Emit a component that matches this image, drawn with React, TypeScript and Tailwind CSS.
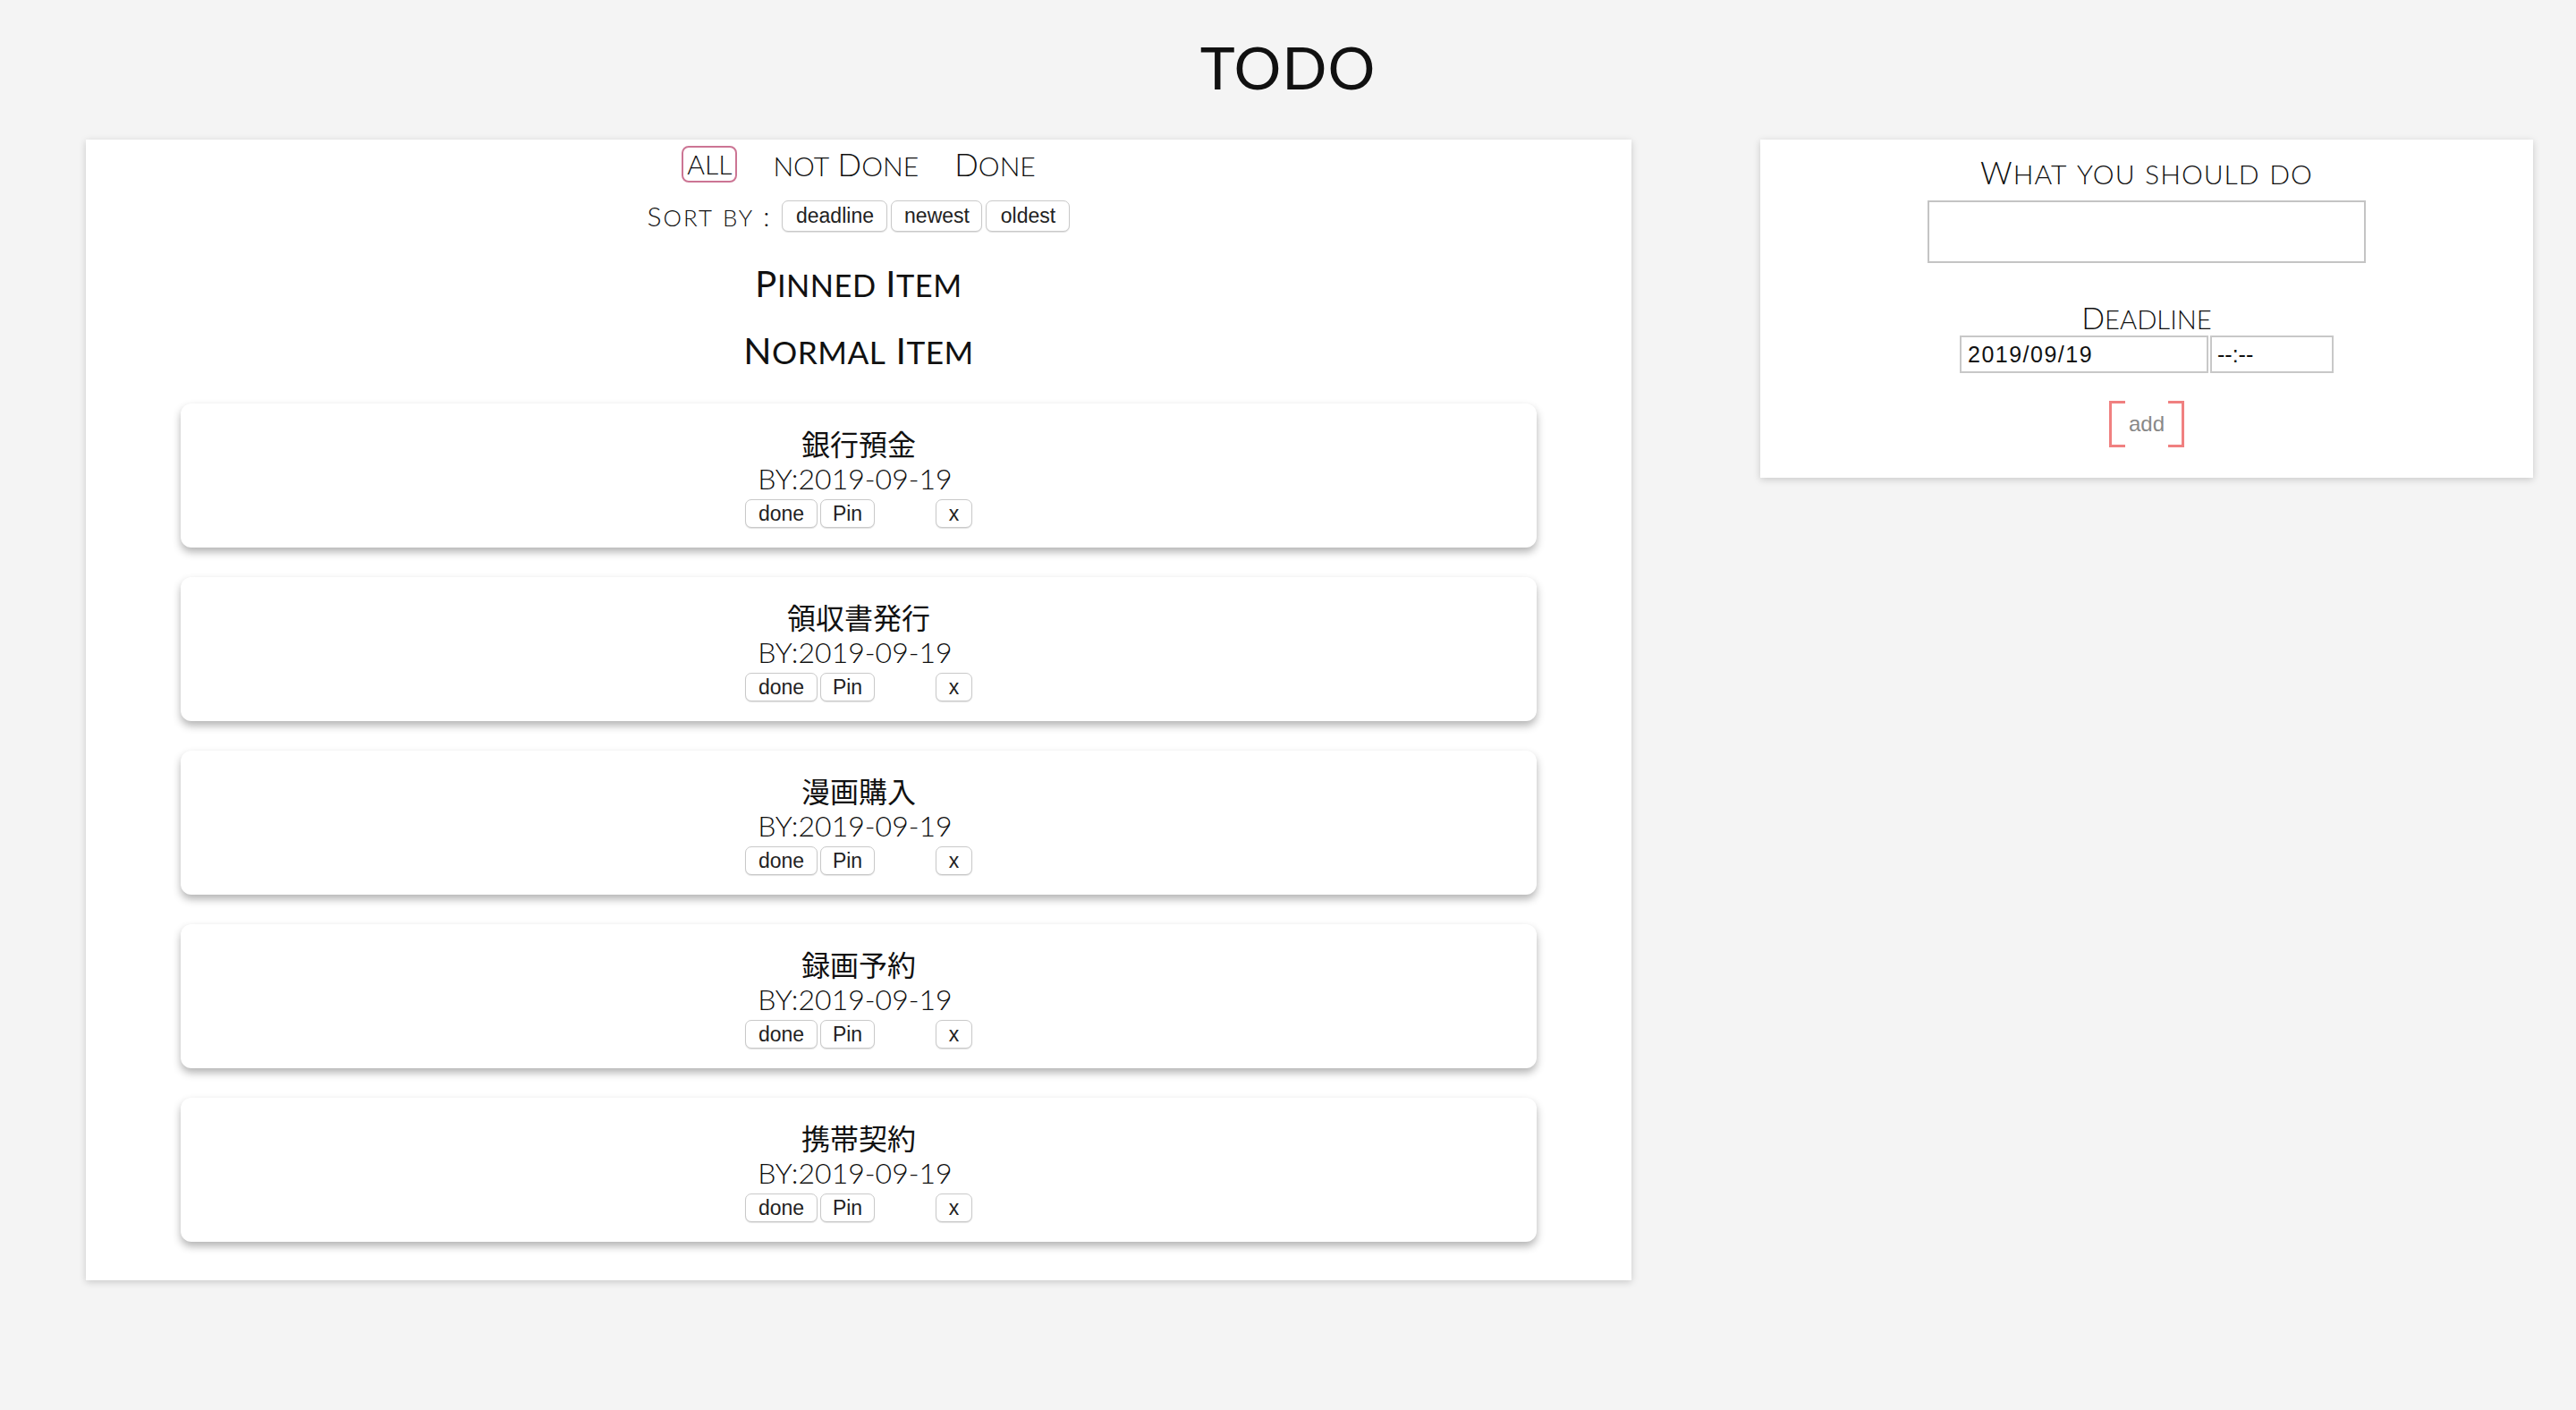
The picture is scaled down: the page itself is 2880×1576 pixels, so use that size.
import React from 'react'

// renders lowercase letters as smaller capitals, like the small-caps display font in the design
function SmallCaps({ text }: { text: string }) {
  const runs = text.match(/[a-z]+|[^a-z]+/g) || []
  return (
    <>
      {runs.map((run, i) =>
        /[a-z]/.test(run) ? (
          <span key={i} className="text-[0.86em]">
            {run.toUpperCase()}
          </span>
        ) : (
          <span key={i}>{run}</span>
        )
      )}
    </>
  )
}

const display = "font-['Lato','Open_Sans',sans-serif] font-light text-[#111]"
const sysBtn =
  "inline-flex items-center justify-center bg-white border border-[#c9c9c9] rounded-[7px] shadow-[0_1px_1px_rgba(0,0,0,0.12)] font-['Liberation_Sans',Arial,sans-serif] text-[23px] text-[#222] leading-none"

interface TodoItem {
  id: number
  title: string
  deadline: string
}

const todos: TodoItem[] = [
  { id: 1, title: '銀行預金', deadline: '2019-09-19' },
  { id: 2, title: '領収書発行', deadline: '2019-09-19' },
  { id: 3, title: '漫画購入', deadline: '2019-09-19' },
  { id: 4, title: '録画予約', deadline: '2019-09-19' },
  { id: 5, title: '携帯契約', deadline: '2019-09-19' }
]

function TodoCard({ item }: { item: TodoItem }) {
  return (
    <article className="bg-white rounded-[12px] shadow-[0_5px_10px_rgba(0,0,0,0.3)] pt-[24px] pb-[22px] flex flex-col items-center">
      <h3 className="font-['Noto_Sans_CJK_JP',sans-serif] text-[32px] leading-[40px] text-[#111]">
        {item.title}
      </h3>
      <p className={`${display} text-[32px] leading-[38px] mt-[1px] pr-[8px]`}>BY:{item.deadline}</p>
      <div className="flex items-center mt-[4px]">
        <button className={`${sysBtn} w-[81px] h-[32px]`}>done</button>
        <button className={`${sysBtn} w-[61px] h-[32px] ml-[3px]`}>Pin</button>
        <button className={`${sysBtn} w-[41px] h-[32px] ml-[68px]`}>x</button>
      </div>
    </article>
  )
}

export default function App() {
  return (
    <div className="min-h-screen w-full bg-[#f4f4f4]">
      <header className="pt-[35px] text-center">
        <h1 className={`${display} font-normal text-[66px] leading-[80px] tracking-[1px]`}>TODO</h1>
      </header>

      <main className="flex items-start pl-[96px] gap-[144px] mt-[41px]">
        {/* List panel */}
        <section className="w-[1728px] bg-white shadow-[0_2px_8px_rgba(0,0,0,0.18)] pt-[7px] pb-[43px]">
          <nav className={`${display} text-[35px] flex items-center justify-center gap-[40px] h-[41px]`}>
            <span className="inline-flex items-center h-[41px] px-[4px] border-2 border-[#cc7594] rounded-[8px]">
              <SmallCaps text="all" />
            </span>
            <span>
              <SmallCaps text="not Done" />
            </span>
            <span>
              <SmallCaps text="Done" />
            </span>
          </nav>

          <div className="flex items-center justify-center h-[35px] mt-[20px]">
            <span className={`${display} text-[30px] tracking-[2px] mr-[12px]`}>
              <SmallCaps text="Sort by :" />
            </span>
            <button className={`${sysBtn} w-[118px] h-[35px]`}>deadline</button>
            <button className={`${sysBtn} w-[102px] h-[35px] ml-[4px]`}>newest</button>
            <button className={`${sysBtn} w-[94px] h-[35px] ml-[4px]`}>oldest</button>
          </div>

          <h2 className={`${display} font-normal text-[40px] tracking-[0.5px] leading-[48px] text-center mt-[34px]`}>
            <SmallCaps text="Pinned Item" />
          </h2>
          <h2 className={`${display} font-normal text-[41px] tracking-[0.5px] leading-[48px] text-center mt-[25px]`}>
            <SmallCaps text="Normal Item" />
          </h2>

          <div className="flex flex-col gap-[33px] px-[106px] mt-[33px]">
            {todos.map(item => (
              <TodoCard key={item.id} item={item} />
            ))}
          </div>
        </section>

        {/* Add form panel */}
        <section className="w-[864px] bg-white shadow-[0_2px_8px_rgba(0,0,0,0.18)] pt-[18px] pb-[34px] flex flex-col items-center">
          <h2 className={`${display} text-[35px] tracking-[1px] leading-[36px]`}>
            <SmallCaps text="What you should do" />
          </h2>
          <textarea className="mt-[12px] w-[490px] h-[70px] border-2 border-[#c4c4c4] outline-none resize-none" />

          <h2 className={`${display} text-[34px] leading-[36px] mt-[43px]`}>
            <SmallCaps text="Deadline" />
          </h2>
          <div className="flex items-center gap-[2px]">
            <input
              readOnly
              value="2019/09/19"
              className="w-[278px] h-[42px] border-2 border-[#c8c8c8] pl-[7px] font-['Liberation_Sans',Arial,sans-serif] text-[25px] tracking-[1.5px] text-[#111] outline-none"
            />
            <input
              readOnly
              value="--:--"
              className="w-[138px] h-[42px] border-2 border-[#c8c8c8] pl-[6px] font-['Liberation_Sans',Arial,sans-serif] text-[25px] text-[#111] outline-none"
            />
          </div>

          <button className="relative mt-[31px] w-[84px] h-[52px] border-[3px] border-[#f08080] bg-white font-['Liberation_Sans',Arial,sans-serif] text-[24px] text-[#888]">
            <span className="absolute -top-[3px] -bottom-[3px] left-[15px] right-[15px] bg-white" />
            <span className="relative">add</span>
          </button>
        </section>
      </main>
    </div>
  )
}
